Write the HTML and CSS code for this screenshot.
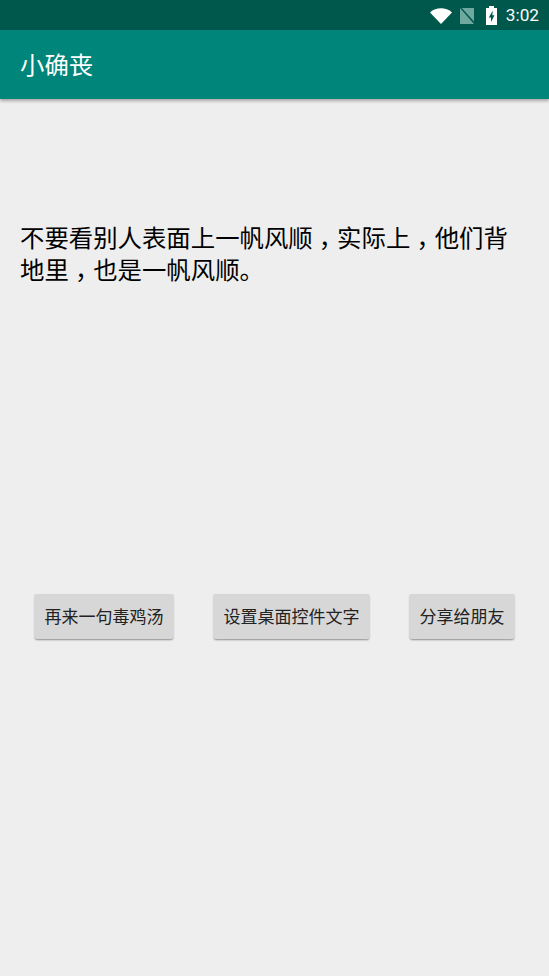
FILE: index.html
```html
<!DOCTYPE html>
<html lang="zh-CN">
<head>
<meta charset="utf-8">
<title>小确丧</title>
<link rel="stylesheet" href="styles.css">
</head>
<body>
<div class="statusbar">
  <svg class="ic-wifi" viewBox="0 0 22 16" width="22" height="16"><path d="M0 4.500C3 1.700 7 .3 11 .3s8 1.400 11 4.200L11 16z" fill="#fff"/></svg>
  <svg class="ic-sim" viewBox="0 0 14 16" width="14" height="16"><path d="M0 0h14v16H0z" fill="#6fa89f"/><path d="M0 0h1.800L14 13.500V16z" fill="#00584c"/></svg>
  <svg class="ic-batt" viewBox="0 0 11 19" width="11" height="19"><path d="M3 0h5v2h3v17H0V2h3z" fill="#fff"/><path d="M6.800 4.500L2.800 11.500H5v4.500L8.500 9.300H6.300z" fill="#00584c"/></svg>
  <span class="clock">3:02</span>
</div>
<header class="appbar"><h1 class="title">小确丧</h1></header>
<main class="content">
  <p class="quote">不要看别人表面上一帆风顺<span class="comma">，</span>实际上<span class="comma">，</span>他们背<br>地里<span class="comma">，</span>也是一帆风顺。</p>
  <div class="actions">
    <button class="btn">再来一句毒鸡汤</button>
    <button class="btn">设置桌面控件文字</button>
    <button class="btn">分享给朋友</button>
  </div>
</main>
</body>
</html>
```
FILE: styles.css
```css
* { box-sizing: border-box; }
html, body { margin: 0; height: 100%; }
body {
  width: 549px;
  height: 976px;
  overflow: hidden;
  background: #eeeeee;
  font-family: "Noto Sans CJK SC", "Noto Sans", sans-serif;
}
.statusbar {
  height: 30px;
  background: #00584c;
  display: flex;
  align-items: center;
  justify-content: flex-end;
  padding: 2px 10px 0 0;
}
.ic-wifi { margin-right: 8px; }
.ic-sim { margin-right: 12px; }
.ic-batt { margin: -2px 9px 0 0; }
.clock {
  font-family: Roboto, sans-serif;
  font-size: 17.200px;
  color: #fff;
  margin-top: -3px;
}
.appbar {
  height: 69px;
  background: #00857a;
  display: flex;
  align-items: center;
  padding: 0 0 2px 20px;
  box-shadow: 0 2px 3px rgba(0,0,0,.3);
  position: relative;
}
.title {
  margin: 0;
  font-size: 24.400px;
  font-weight: 400;
  color: #fff;
  line-height: 32px;
}
.content { padding: 124px 0 0; }
.quote {
  margin: 0;
  padding: 0 20px;
  height: 371px;
  font-family: "Liberation Sans", "Noto Sans CJK SC", sans-serif;
  font-size: 24.400px;
  line-height: 32px;
  color: #000;
}
.comma {
  display: inline-block;
  width: 1em;
  text-align: center;
  font-feature-settings: "halt";
}
.actions {
  display: flex;
  justify-content: space-between;
  padding: 0 34px;
}
.btn {
  height: 45px;
  padding: 0 10.500px 2px;
  border: 0;
  border-radius: 3px;
  background: #d7d7d7;
  box-shadow: 0 2px 2px -1px rgba(0,0,0,.4), 0 0 1px rgba(0,0,0,.1);
  font-family: inherit;
  font-size: 17px;
  color: #222;
  white-space: nowrap;
}
```
